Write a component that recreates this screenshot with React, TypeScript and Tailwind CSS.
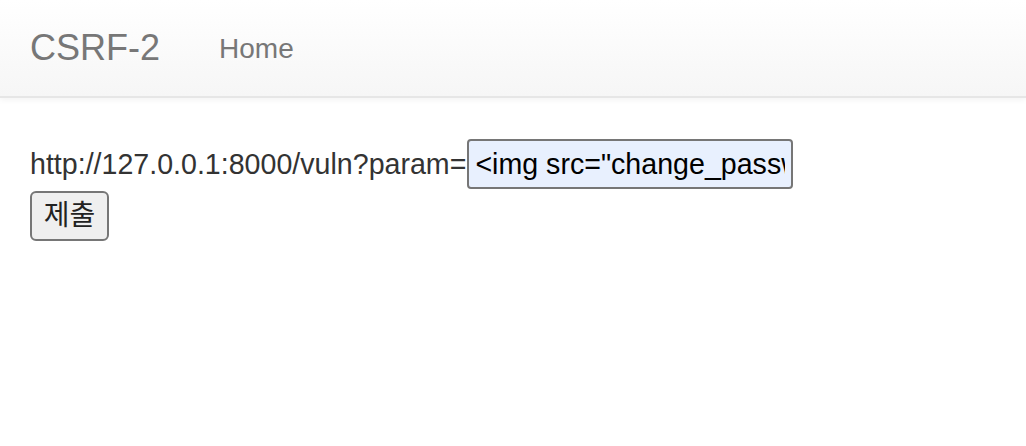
const App = () => {
  return (
    <div className="min-h-[446px] bg-white font-['Liberation_Sans','Noto_Sans_CJK_KR',sans-serif]">
      <div className="h-[98px] bg-linear-to-b from-white to-[#f6f6f6] border-b-2 border-[#e6e6e6] shadow-[0_2px_6px_rgba(0,0,0,0.05)]">
        <div className="flex items-start pt-[28px] px-[30px]">
          <a className="text-[36px] leading-[40px] text-[#777]">CSRF-2</a>
          <a className="ml-[59px] mt-[1px] text-[28px] leading-[40px] text-[#777]">Home</a>
        </div>
      </div>
      <form className="px-[30px] pt-[41px]">
        <div className="flex items-center h-[50px] text-[28.6px] text-[#333]">
          <span>http://127.0.0.1:8000/vuln?param=</span>
          <input
            className="ml-[1px] w-[326px] h-[50px] px-[6px] bg-[#e8f0fe] border-2 border-[#767676] rounded-[4px] text-[28.6px] text-black outline-none"
            defaultValue={'<img src="change_password?password=1234">'}
          />
        </div>
        <button
          type="button"
          className="mt-[2px] h-[50px] w-[79px] bg-[#efefef] border-2 border-[#767676] rounded-[6px] text-[28px] text-[#222]"
        >
          제출
        </button>
      </form>
    </div>
  );
};

export default App;
